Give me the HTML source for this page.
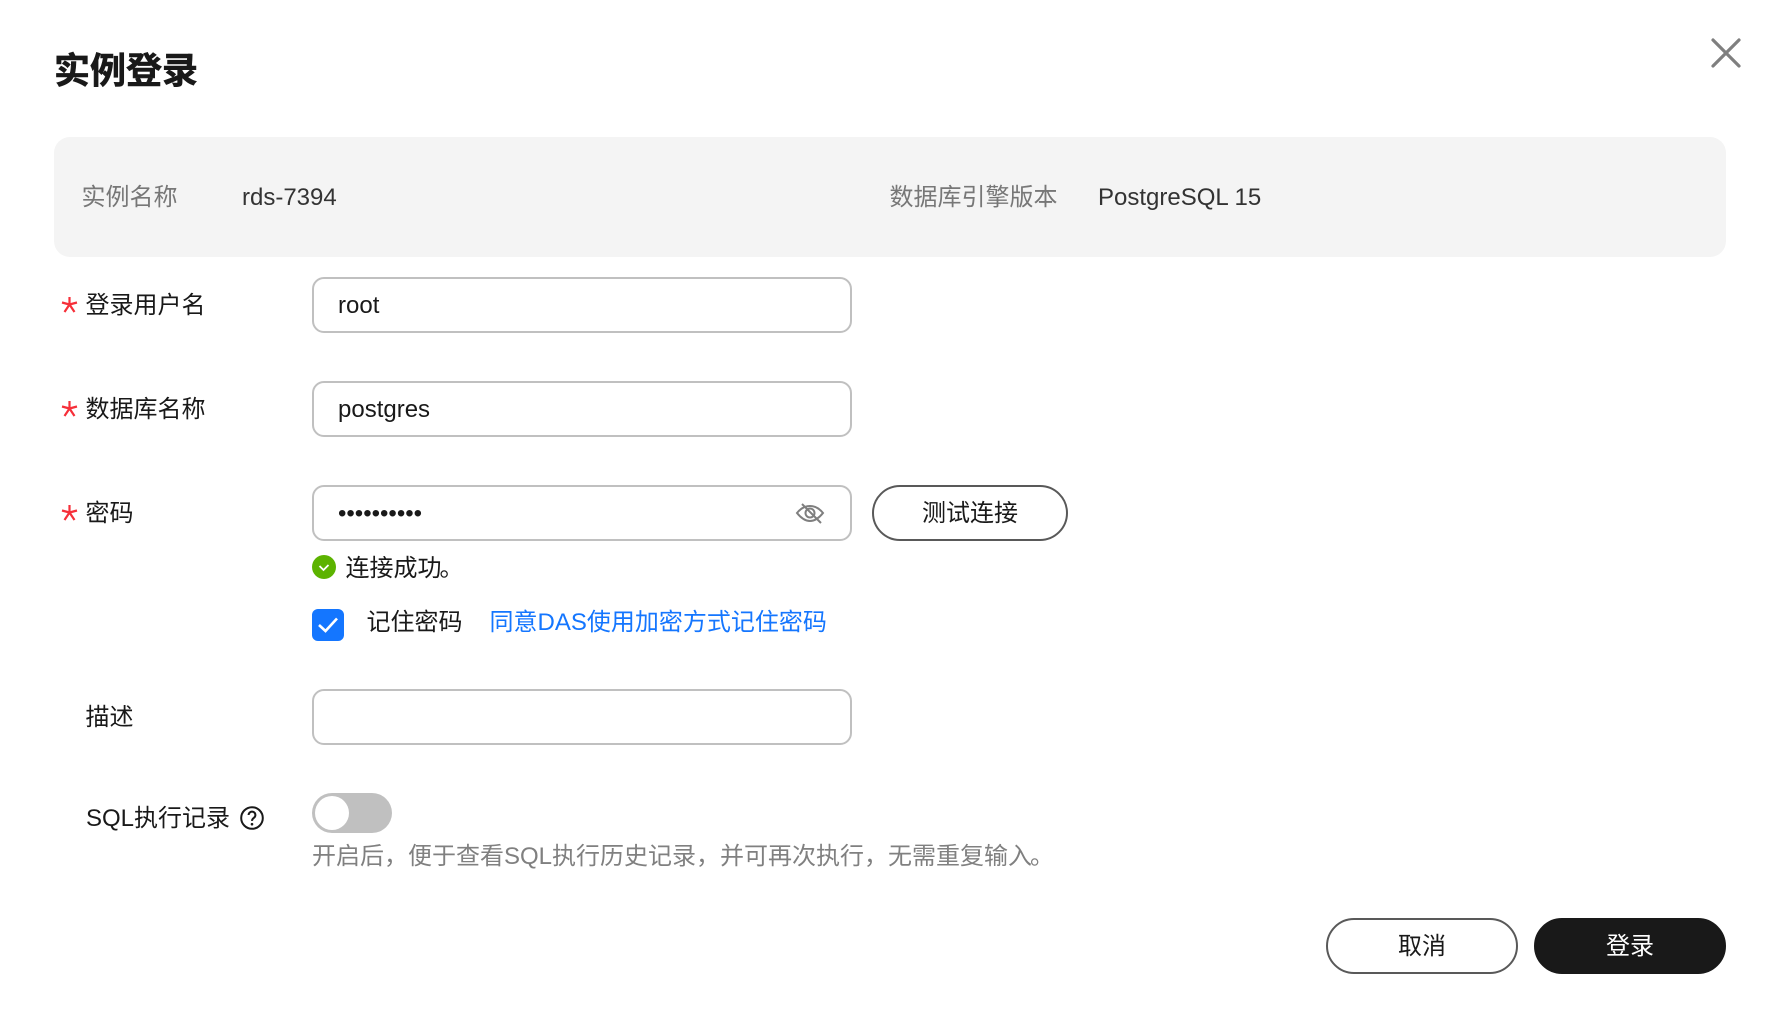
<!DOCTYPE html>
<html lang="zh-CN"><head><meta charset="utf-8"><title>实例登录</title>
<style>
html,body{margin:0;padding:0;background:#fff;width:1778px;height:1019px;overflow:hidden}
body{position:relative;font-family:"Liberation Sans","Noto Sans CJK SC",sans-serif;font-size:24px;color:#191919}
.t{position:absolute;line-height:32px;height:32px;white-space:nowrap}
.box{position:absolute;box-sizing:border-box;background:#fff}
.inp{left:312px;width:540px;height:56px;border:2px solid #c0c0c0;border-radius:12px}
.btn{position:absolute;box-sizing:border-box;border-radius:28px;text-align:center;height:56px;line-height:54px;border:2px solid #595959;background:#fff}
.star{position:absolute;left:61px;width:17px;height:17px}
svg{position:absolute;display:block}
.p{margin-left:-2px}
</style></head><body>
<div class="t" style="left:54px;top:53px;font-size:36px;line-height:36px;height:36px;font-weight:700;-webkit-text-stroke:.6px #191919">实例登录</div>
<svg style="left:1708px;top:35px" width="36" height="36" viewBox="0 0 36 36"><path d="M5 5L31 31M31 5L5 31" stroke="#7f7f7f" stroke-width="3.2" stroke-linecap="round" fill="none"/></svg>
<div class="box" style="left:54px;top:137px;width:1672px;height:120px;background:#f4f4f4;border-radius:16px"></div>
<div class="t" style="left:81.5px;top:182px;color:#777">实例名称</div>
<div class="t" style="left:242px;top:182px;color:#333">rds-7394</div>
<div class="t" style="left:889.5px;top:182px;color:#777">数据库引擎版本</div>
<div class="t" style="left:1098px;top:182px;color:#333">PostgreSQL 15</div>

<svg class="star" style="top:296px" viewBox="0 0 17 17"><path d="M8.5 1V8.5M8.5 8.5L1 6.5M8.5 8.5L16 6.5M8.5 8.5L3.5 16M8.5 8.5L13.5 16" stroke="#f62f39" stroke-width="2.2" fill="none"/></svg>
<div class="t" style="left:85.5px;top:290px">登录用户名</div>
<div class="box inp" style="top:277px"></div>
<div class="t" style="left:338px;top:290px;color:#191919">root</div>

<svg class="star" style="top:400px" viewBox="0 0 17 17"><path d="M8.5 1V8.5M8.5 8.5L1 6.5M8.5 8.5L16 6.5M8.5 8.5L3.5 16M8.5 8.5L13.5 16" stroke="#f62f39" stroke-width="2.2" fill="none"/></svg>
<div class="t" style="left:85.5px;top:394px">数据库名称</div>
<div class="box inp" style="top:381px"></div>
<div class="t" style="left:338px;top:394px">postgres</div>

<svg class="star" style="top:504px" viewBox="0 0 17 17"><path d="M8.5 1V8.5M8.5 8.5L1 6.5M8.5 8.5L16 6.5M8.5 8.5L3.5 16M8.5 8.5L13.5 16" stroke="#f62f39" stroke-width="2.2" fill="none"/></svg>
<div class="t" style="left:85.5px;top:498px">密码</div>
<div class="box inp" style="top:485px"></div>
<div class="t" style="left:338px;top:497.5px">••••••••••</div>
<svg style="left:795px;top:501px" width="30" height="24" viewBox="0 0 30 24"><path d="M2 12C6 7 10 5 15 5s9 2 13 7c-4 5-8 8-13 8S6 17 2 12Z" stroke="#7f7f7f" stroke-width="2" fill="none"/><circle cx="15" cy="12" r="4.5" stroke="#7f7f7f" stroke-width="2" fill="none"/><path d="M7 3L26 22" stroke="#7f7f7f" stroke-width="2"/></svg>
<div class="btn" style="left:872px;top:485px;width:196px">测试连接</div>

<svg style="left:312px;top:555px" width="24" height="24" viewBox="0 0 24 24"><circle cx="12" cy="12" r="12" fill="#5cb300"/><path d="M7.5 11L11.5 15L16.5 10" stroke="#fff" stroke-width="1.8" fill="none"/></svg>
<div class="t" style="left:345.5px;top:553px">连接成功<span class="p">。</span></div>

<svg style="left:312px;top:609px" width="32" height="32" viewBox="0 0 32 32"><rect width="32" height="32" rx="6" fill="#1476ff"/><path d="M7 16L13.5 22L25 9.5" stroke="#fff" stroke-width="2.6" fill="none"/></svg>
<div class="t" style="left:366.5px;top:607px">记住密码</div>
<div class="t" style="left:489.5px;top:607px;color:#1476ff">同意DAS使用加密方式记住密码</div>

<div class="t" style="left:85.5px;top:702px">描述</div>
<div class="box inp" style="top:689px"></div>

<div class="t" style="left:86px;top:803px">SQL执行记录</div>
<svg style="left:240px;top:806px" width="24" height="24" viewBox="0 0 24 24"><circle cx="12" cy="12" r="10.8" stroke="#191919" stroke-width="2" fill="none"/><path d="M8.6 9a3.4 3.4 0 1 1 5.2 2.9c-1.2.8-1.8 1.4-1.8 3" stroke="#191919" stroke-width="2" fill="none"/><circle cx="12" cy="18.2" r="1.3" fill="#191919"/></svg>
<div class="box" style="left:312px;top:793px;width:80px;height:40px;border-radius:20px;background:#c0c0c0"></div>
<div class="box" style="left:315px;top:796px;width:34px;height:34px;border-radius:50%;background:#fff"></div>
<div class="t" style="left:312px;top:841px;color:#808080">开启后，便于查看SQL执行历史记录，并可再次执行，无需重复输入<span class="p">。</span></div>

<div class="btn" style="left:1326px;top:918px;width:192px">取消</div>
<div class="btn" style="left:1534px;top:918px;width:192px;background:#191919;border-color:#191919;color:#fff">登录</div>
</body></html>
